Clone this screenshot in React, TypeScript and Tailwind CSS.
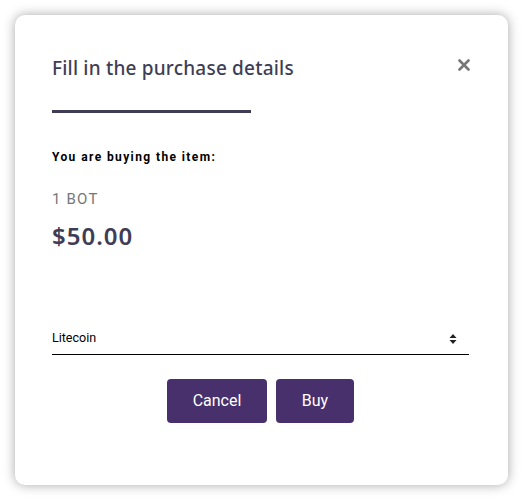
export default function App() {
  return (
    <div className="w-[523px] h-[500px] bg-white p-[15px]">
      <div className="relative w-[493px] h-[470px] bg-white rounded-[10px] shadow-[0_0_12px_rgba(0,0,0,0.35)] px-[37px] pt-[40px]">
        <button className="absolute right-[38px] top-[44px]">
          <svg width="12" height="12" viewBox="0 0 12 12">
            <path d="M1.5 1.5 L10.5 10.5 M10.5 1.5 L1.5 10.5" stroke="#777" strokeWidth="2.6" strokeLinecap="round" />
          </svg>
        </button>
        <h2 className="text-[19px] leading-[27px] font-medium text-[#3f3d56] tracking-[0.2px]" style={{ fontFamily: "'Noto Sans', sans-serif" }}>
          Fill in the purchase details
        </h2>
        <div className="mt-[28px] w-[199px] h-[3px] bg-[#3f3d56]" />
        <div style={{ fontFamily: "Roboto, sans-serif" }}>
          <p className="mt-[36px] text-[12px] leading-[16px] font-bold tracking-[1.4px] text-black">You are buying the item:</p>
          <p className="mt-[25px] text-[15px] leading-[18px] tracking-[1.2px] text-[#777]">1 BOT</p>
          <p className="mt-[14px] text-[24px] leading-[28px] font-semibold tracking-[1px] text-[#3f3d56]" style={{ fontFamily: "'Noto Sans', sans-serif" }}>$50.00</p>
          <div className="mt-[73px] w-[417px] h-[32px] border-b border-black flex items-center justify-between pr-[12px]">
            <span className="text-[12.5px] text-black">Litecoin</span>
            <svg width="8" height="12" viewBox="0 0 8 12">
              <path d="M4 1 L7.5 5 L0.5 5 Z M0.5 7 L7.5 7 L4 11 Z" fill="#222" />
            </svg>
          </div>
          <div className="mt-[24px] w-[417px] flex justify-center gap-[9px]">
            <button className="w-[100px] h-[44px] rounded-[4px] bg-[#48306c] text-white text-[16px]">Cancel</button>
            <button className="w-[78px] h-[44px] rounded-[4px] bg-[#48306c] text-white text-[16px]">Buy</button>
          </div>
        </div>
      </div>
    </div>
  );
}
